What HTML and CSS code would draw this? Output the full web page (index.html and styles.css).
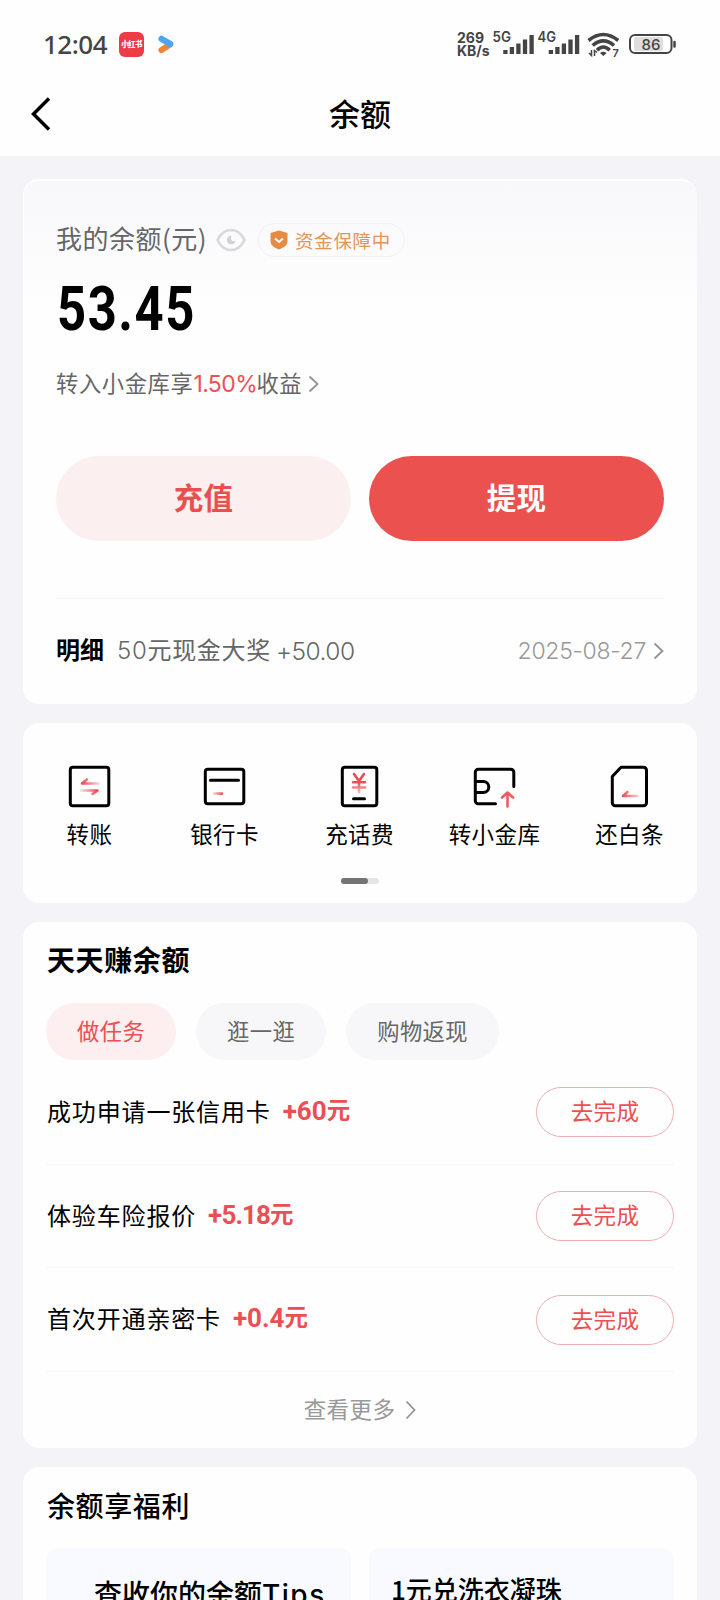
FILE: index.html
```html
<!DOCTYPE html>
<html lang="zh-CN">
<head>
<meta charset="utf-8">
<title>余额</title>
<link rel="stylesheet" href="styles.css">
</head>
<body>
<svg width="0" height="0" class="defs">
  <defs>
    <linearGradient id="fadeRight" gradientUnits="userSpaceOnUse" x1="14" y1="0" x2="33" y2="0"><stop offset="0" stop-color="#e94c51"/><stop offset="1" stop-color="#e94c51" stop-opacity=".15"/></linearGradient>
    <linearGradient id="fadeLeft" gradientUnits="userSpaceOnUse" x1="12" y1="0" x2="29" y2="0"><stop offset="0" stop-color="#e94c51" stop-opacity=".15"/><stop offset="1" stop-color="#e94c51"/></linearGradient>
    <linearGradient id="dash" gradientUnits="userSpaceOnUse" x1="9" y1="0" x2="20" y2="0"><stop offset="0" stop-color="#e94c51" stop-opacity=".15"/><stop offset="1" stop-color="#e94c51"/></linearGradient>
    <linearGradient id="fadeDown" gradientUnits="userSpaceOnUse" x1="0" y1="17" x2="0" y2="29"><stop offset="0" stop-color="#e94c51"/><stop offset="1" stop-color="#e94c51" stop-opacity=".3"/></linearGradient>
  </defs>
</svg>
<div class="screen">
  <header class="top">
    <div class="status">
      <span class="time">12:04</span>
      <span class="app">小红书</span>
      <svg class="play" width="16" height="19" viewBox="0 0 16 19"><path d="M3.5 15 12 9.5" stroke="#ee8434" stroke-width="6" stroke-linecap="round"/><path d="M3.5 3.8 12.3 9" stroke="#4aa5f5" stroke-width="6.2" stroke-linecap="round"/></svg>
      <div class="speed"><span>269</span><span>KB/s</span></div>
      <svg class="signals" width="188" height="36" viewBox="490 26 188 36">
        <g fill="#444" font-family="Inter, Roboto, sans-serif" font-weight="600">
          <text x="492.5" y="42.4" font-size="14" textLength="18.5" lengthAdjust="spacingAndGlyphs">5G</text>
          <text x="537.5" y="42.4" font-size="14" textLength="18.5" lengthAdjust="spacingAndGlyphs">4G</text>
          <text x="612.5" y="56.8" font-size="11">7</text>
        </g>
        <g stroke="#444" stroke-width="4.3">
          <path d="M505.4 54v-4M511.9 54v-7M518.4 54v-10.500M525 54v-14.500M531.600 54v-19"/>
          <path d="M550.9 54v-4M557.400 54v-7M563.900 54v-10.500M570.500 54v-14.500M577.100 54v-19"/>
        </g>
        <g fill="none" stroke="#444" stroke-width="3.6">
          <path d="M588.500 40.500Q603.300 28.500 618.200 40.500"/><path d="M592.700 45.500Q603.300 36.300 614 45.500"/><path d="M597 50.200Q603.300 43.800 609.700 50.200"/>
        </g>
        <path d="M600 53q3.300-2.500 6.600 0l-3.300 3z" fill="#444"/>
        <path d="M591.500 50v5.500l-2.500-2.500M594.500 56v-5.500l2.500 2" fill="none" stroke="#444" stroke-width="1.500"/>
        <rect x="634" y="37" width="29" height="14" rx="2" fill="#dedede"/>
        <rect x="630" y="35" width="41.500" height="18" rx="5" fill="none" stroke="#444" stroke-width="2"/>
        <path d="M674.500 42v4.500" stroke="#444" stroke-width="2.500" stroke-linecap="round"/>
        <text x="641.500" y="49.700" font-size="15" font-family="Inter, sans-serif" font-weight="500" fill="#444" textLength="19">86</text>
      </svg>
    </div>
    <div class="nav">
      <svg class="back" width="20" height="34" viewBox="0 0 20 34"><path d="M18 1.500 2.500 17 18 32.500" fill="none" stroke="#000" stroke-width="3.500"/></svg>
      <h1>余额</h1>
    </div>
  </header>
  <main>
    <section class="card balance">
      <div class="label">
        <span class="mine">我的余额(元)</span>
        <svg class="eye" width="30" height="24" viewBox="0 0 30 24"><path d="M1.500 12C5 4.500 10 2 15 2s10 2.500 13.500 10C25 19.500 20 22 15 22S5 19.500 1.500 12z" fill="none" stroke="#d9d9db" stroke-width="2.600"/><path d="M15 8a4 4 0 1 0 4 5.500 3.600 3.600 0 0 1-4-5.500z" fill="#d2d2d5" stroke="#d2d2d5"/></svg>
        <span class="safe"><svg width="18" height="20" viewBox="0 0 18 20"><path d="M9 .5 17.500 3v8c0 4.500-4 6.800-8.500 8.500C4.500 17.800.5 15.500.5 11V3z" fill="#e78b42"/><path d="m5 8.500 4 3.500 4-3.500" fill="none" stroke="#fff" stroke-width="2"/></svg><span>资金保障中</span></span>
      </div>
      <div class="amount">53.45</div>
      <div class="promo"><span class="up">转入小金库享</span><span class="rate">1.50%</span><span class="up">收益</span><svg class="chev" width="11" height="18" viewBox="0 0 11 18"><path d="m1.500 1.500 8 7.500-8 7.500"/></svg></div>
      <div class="actions"><span class="btn soft">充值</span><span class="btn solid">提现</span></div>
      <div class="detail"><b class="up">明细</b><span class="what up"><span class="num">50</span>元现金大奖</span><span class="plus num">+50.00</span><span class="date num">2025-08-27</span><svg class="chev" width="11" height="18" viewBox="0 0 11 18"><path d="m1.500 1.500 8 7.500-8 7.500"/></svg></div>
    </section>

    <section class="card services">
      <div class="grid">
        <div class="item"><svg class="icon" viewBox="0 0 44 44"><rect x="2.300" y="2.300" width="38.500" height="38.500" rx="2.500"/><path d="M30.500 18.500H14l5-4" stroke="url(#fadeRight)" stroke-width="2.600"/><path d="M13 25.500h16.500l-5 3.500" stroke="url(#fadeLeft)" stroke-width="2.600"/></svg><span>转账</span></div>
        <div class="item"><svg class="icon" viewBox="0 0 44 44"><rect x="2.300" y="4.300" width="38.500" height="34.500" rx="2.500"/><path d="M7.500 15.300h28"/><path d="M11 28.500 19 28.600" stroke="url(#dash)" stroke-width="2.600"/></svg><span>银行卡</span></div>
        <div class="item"><svg class="icon" viewBox="0 0 44 44"><rect x="4.300" y="2.300" width="34.500" height="38.500" rx="2.500"/><path d="m16 9 5 7 5-7M15 17.200h12M15 22.500h12M21 16v11.500" stroke="url(#fadeDown)" stroke-width="2.600"/><path d="M15.500 33.700h11"/></svg><span>充话费</span></div>
        <div class="item"><svg class="icon" viewBox="0 0 44 44"><path d="M22.500 38.800H5.300a3 3 0 0 1-3-3V7.300a3 3 0 0 1 3-3h32.500a3 3 0 0 1 3 3V21.500M2.300 16.500h8a5.500 5.500 0 0 1 0 11h-8"/><path d="M34.500 41.500V27.500M29 32.500l5.500-5 5.500 5" stroke="#ea5c62" stroke-width="2.600"/></svg><span>转小金库</span></div>
        <div class="item"><svg class="icon" viewBox="0 0 44 44"><path d="M13 2.300h22.500a3 3 0 0 1 3 3v32.500a3 3 0 0 1-3 3H7.300a3 3 0 0 1-3-3V11.500z"/><path d="M29.500 31H15l4.500-4" stroke="url(#fadeRight)" stroke-width="2.600"/></svg><span>还白条</span></div>
      </div>
      <div class="pager"><i></i></div>
    </section>

    <section class="card earn">
      <h2>天天赚余额</h2>
      <div class="tabs"><span class="tab on">做任务</span><span class="tab">逛一逛</span><span class="tab">购物返现</span></div>
      <div class="task"><span class="name">成功申请一张信用卡</span><b><span class="sum">+60</span>元</b><span class="go">去完成</span></div>
      <div class="task"><span class="name">体验车险报价</span><b><span class="sum tight">+5.18</span>元</b><span class="go">去完成</span></div>
      <div class="task"><span class="name">首次开通亲密卡</span><b><span class="sum">+0.4</span>元</b><span class="go">去完成</span></div>
      <div class="more"><span class="up">查看更多</span><svg class="chev" width="11" height="20" viewBox="0 0 11 20"><path d="m1.500 1.500 8 8.500-8 8.500"/></svg></div>
    </section>

    <section class="card welfare">
      <h2>余额享福利</h2>
      <div class="tiles"><div class="tile tips">查收你的余额<span class="latin">Tips</span></div><div class="tile wash">1元兑洗衣凝珠</div></div>
    </section>
  </main>
</div>
</body>
</html>
```
FILE: styles.css
```css
* { box-sizing: border-box; }
body { margin: 0; }
.defs { position: absolute; }
.screen {
  width: 720px;
  height: 1600px;
  overflow: hidden;
  background: #f3f3f8;
  color: #000;
  font-family: "Noto Sans CJK SC", sans-serif;
  white-space: nowrap;
}
svg { display: block; flex: none; }

.top { height: 156px; background: #fefefe; }
.status { display: flex; align-items: center; height: 88px; padding: 0 42px 0 43px; }
.time { width: 76px; font: 500 26px/30px "Noto Sans", sans-serif; color: #444; letter-spacing: -0.5px; }
.app {
  width: 25px; height: 25px; border-radius: 6px;
  background: #ee3b48; color: #fff;
  font-size: 7.5px; line-height: 24px; font-weight: 900; text-align: center; letter-spacing: -0.6px;
}
.play { margin-left: 14px; }
.speed {
  display: flex; flex-direction: column; width: 33px; margin-left: auto;
  font: 700 14px/13px Inter, sans-serif; color: #444;
}
.nav { display: flex; align-items: center; height: 52px; padding-left: 31px; }
.nav h1 { margin: 0 32px 0 -19px; flex: 1; text-align: center; font-size: 31px; font-weight: 500; line-height: 46px; padding-bottom: 3px; }

main { display: flex; flex-direction: column; gap: 19px; padding: 23px 23px 0; }
.card { background: #fefefe; border-radius: 16px; flex: none; }
.chev path { fill: none; stroke: #929292; stroke-width: 1.8; }
.up { padding-bottom: 4px; }
.num { font-family: Inter, sans-serif; font-weight: 350; }

.balance { height: 525px; padding: 42px 33px 0 32px; border: 1px solid #fff; border-width: 2px 0 0 1px; background: linear-gradient(#f8f8fb, #fefefe 130px); }
.label { display: flex; align-items: center; height: 34px; color: #666; }
.mine { width: 160px; padding-bottom: 5px; font-size: 26px; letter-spacing: 0.5px; }
.safe {
  display: flex; align-items: center; gap: 7px;
  width: 147px; height: 34px; margin-left: 12px; padding-left: 11px;
  border: 1px solid #f2f1f1; border-radius: 17px; color: #e19557;
  font-size: 18.500px; letter-spacing: 0.700px;
}
.amount {
  width: 200px; height: 70px; margin: 18px 0 0 1px;
  font: 700 60.500px/70px Roboto, sans-serif; letter-spacing: 1.800px;
  transform: scaleX(0.84); transform-origin: left;
}
.promo { display: flex; align-items: center; height: 34px; margin-top: 22px; font-size: 22.300px; letter-spacing: 0.600px; color: #666; }
.rate { width: 63px; color: #ec5057; font-size: 23px; font-family: Inter, sans-serif; letter-spacing: -0.600px; }
.promo .chev { margin-left: 6px; }
.actions { display: grid; grid-template-columns: 1fr 1fr; gap: 18px; margin-top: 55px; }
.btn { height: 85px; border-radius: 43px; text-align: center; font-size: 29.500px; line-height: 80px; font-weight: 700; letter-spacing: 0.300px; }
.soft { background: #fcefef; color: #ea4f4f; }
.solid { background: #eb514f; color: #fff; }
.detail { display: flex; align-items: center; height: 105px; margin-top: 56px; border-top: 2px solid #f7f7f8; color: #666; font-size: 24px; }
.detail b { width: 61px; color: #000; }
.what { width: 159px; letter-spacing: 0.700px; }
.plus { font-size: 24.500px; letter-spacing: -0.500px; }
.date { margin: 0 7px 0 auto; font-size: 23px; color: #999; letter-spacing: -0.300px; }

.services { height: 180px; padding-top: 42px; }
.grid { display: grid; grid-template-columns: repeat(5, 1fr); margin-left: -1px; }
.item { display: flex; flex-direction: column; align-items: center; font-size: 22.500px; line-height: 34px; letter-spacing: 0.400px; }
.icon { width: 44px; height: 44px; margin-bottom: 7px; fill: none; stroke: #000; stroke-width: 3; stroke-linecap: round; stroke-linejoin: round; }
.pager { width: 38px; height: 6px; margin: 28px auto 0 318px; border-radius: 3px; background: #e5e5e5; }
.pager i { display: block; width: 27px; height: 6px; border-radius: 3px; background: #747474; }

.earn { height: 526px; padding: 0 23px; }
h2 { margin: 0 0 0 1px; font-size: 28px; line-height: 40px; letter-spacing: 0.600px; }
.earn h2 { padding-top: 17px; }
.tabs { display: flex; gap: 20px; margin: 24px 0 1px; height: 57px; }
.tab { padding: 0 31px; border-radius: 29px; line-height: 54px; font-size: 22.300px; letter-spacing: 0.400px; background: #f7f7f9; color: #666; }
.tab.on { background: #fdeeef; color: #ea4f53; }
.task { display: flex; align-items: center; height: 103.700px; border-bottom: 1px solid #f7f7f8; font-size: 24px; letter-spacing: 0.850px; line-height: 40px; }
.name { margin-left: 1px; padding-bottom: 3px; }
.task b { display: flex; margin-left: 12px; padding-bottom: 3px; color: #ea4f53; font-size: 23.500px; letter-spacing: 0; }
.sum { font-family: Roboto, sans-serif; font-size: 26px; line-height: 44px; }
.tight { letter-spacing: -0.900px; }
.go { width: 138px; height: 50px; margin-left: auto; border: 1px solid #f0aeb1; border-radius: 25px; color: #ea4f53; text-align: center; font-size: 22.500px; line-height: 45px; letter-spacing: 0.400px; }
.more { display: flex; align-items: center; justify-content: center; gap: 10px; height: 75px; color: #999; font-size: 22.500px; letter-spacing: 0.400px; }

.welfare { height: 200px; padding: 18px 23px 0; }
.welfare h2 { font-weight: 500; }
.tiles { display: grid; grid-template-columns: 1fr 1fr; gap: 18px; margin-top: 23px; }
.tile { height: 200px; border-radius: 12px; background: #f9faff; font-weight: 500; line-height: 40px; }
.tips { padding: 25px 0 0 48px; font-size: 28px; }
.latin { font-family: Inter, sans-serif; letter-spacing: 1.500px; }
.wash { padding: 21px 0 0 22px; font-size: 26px; }
```
